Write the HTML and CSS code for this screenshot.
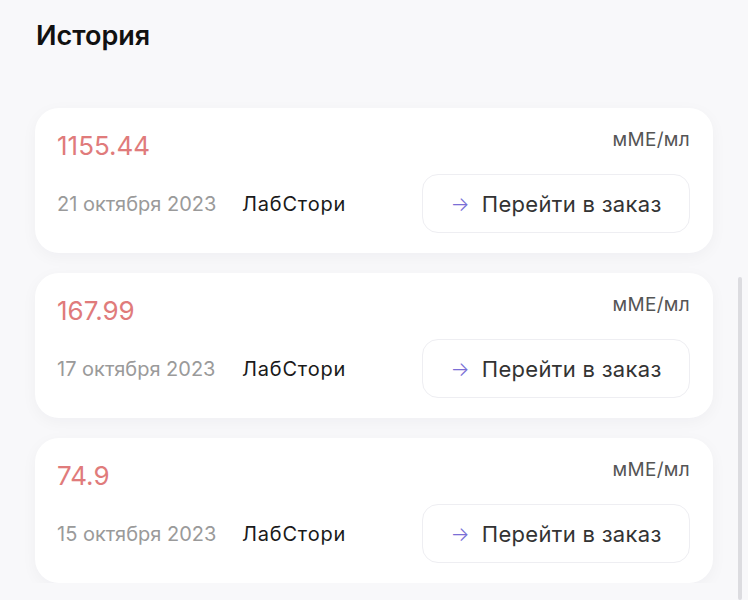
FILE: index.html
```html
<!DOCTYPE html>
<html lang="ru">
<head>
<meta charset="utf-8">
<link rel="stylesheet" href="styles.css">
</head>
<body>
<div class="page">
  <h1 class="title">История</h1>
  <div class="list">
    <div class="card">
      <div class="top">
        <span class="amount">1155.44</span>
        <span class="unit">мМЕ/мл</span>
      </div>
      <div class="bottom">
        <span class="date">21 октября 2023</span>
        <span class="lab">ЛабСтори</span>
        <button class="btn"><span class="arrow">→</span>Перейти в заказ</button>
      </div>
    </div>
    <div class="card">
      <div class="top">
        <span class="amount">167.99</span>
        <span class="unit">мМЕ/мл</span>
      </div>
      <div class="bottom">
        <span class="date">17 октября 2023</span>
        <span class="lab">ЛабСтори</span>
        <button class="btn"><span class="arrow">→</span>Перейти в заказ</button>
      </div>
    </div>
    <div class="card">
      <div class="top">
        <span class="amount">74.9</span>
        <span class="unit">мМЕ/мл</span>
      </div>
      <div class="bottom">
        <span class="date">15 октября 2023</span>
        <span class="lab">ЛабСтори</span>
        <button class="btn"><span class="arrow">→</span>Перейти в заказ</button>
      </div>
    </div>
  </div>
</div>
<div class="scrollbar"></div>
</body>
</html>
```
FILE: styles.css
```css
html, body {
  margin: 0;
  padding: 0;
  background: #f8f8fa;
  font-family: "Inter", "Noto Sans", sans-serif;
  color: #1a1a1a;
}
.page {
  padding: 20px 35px 0 35px;
  width: 678px;
}
.title {
  margin: 0 0 0 1px;
  font-size: 27px;
  font-weight: 600;
  line-height: 32px;
  color: #111;
}
.list {
  margin-top: 56px;
  display: flex;
  flex-direction: column;
  gap: 20px;
}
.card {
  background: #fff;
  border-radius: 24px;
  padding: 22px 23px 20px 22px;
  box-shadow: 0 4px 16px rgba(30, 30, 60, 0.04);
  display: flex;
  flex-direction: column;
  gap: 12px;
}
.top {
  display: flex;
  justify-content: space-between;
  align-items: flex-start;
}
.amount {
  font-size: 26px;
  line-height: 32px;
  color: #e07b7b;
  font-weight: 400;
}
.unit {
  font-size: 19px;
  line-height: 20px;
  letter-spacing: 0.3px;
  color: #555;
}
.bottom {
  display: flex;
  align-items: center;
}
.date {
  font-size: 20px;
  color: #9a9a9a;
  width: 185px;
}
.lab {
  font-size: 20px;
  letter-spacing: 0.8px;
  color: #1a1a1a;
}
.btn {
  margin-left: auto;
  width: 268px;
  height: 59px;
  border: 1px solid #eeeef2;
  border-radius: 16px;
  background: #fff;
  font-family: inherit;
  font-size: 22px;
  letter-spacing: 0.3px;
  color: #333;
  display: flex;
  align-items: center;
  justify-content: center;
  gap: 12px;
  padding: 0;
}
.arrow {
  color: #7b6fd6;
  font-size: 20px;
  font-weight: 300;
}
.scrollbar {
  position: absolute;
  left: 738px;
  top: 277px;
  width: 4px;
  height: 323px;
  background: #dcdce0;
  border-radius: 2px;
}
```
